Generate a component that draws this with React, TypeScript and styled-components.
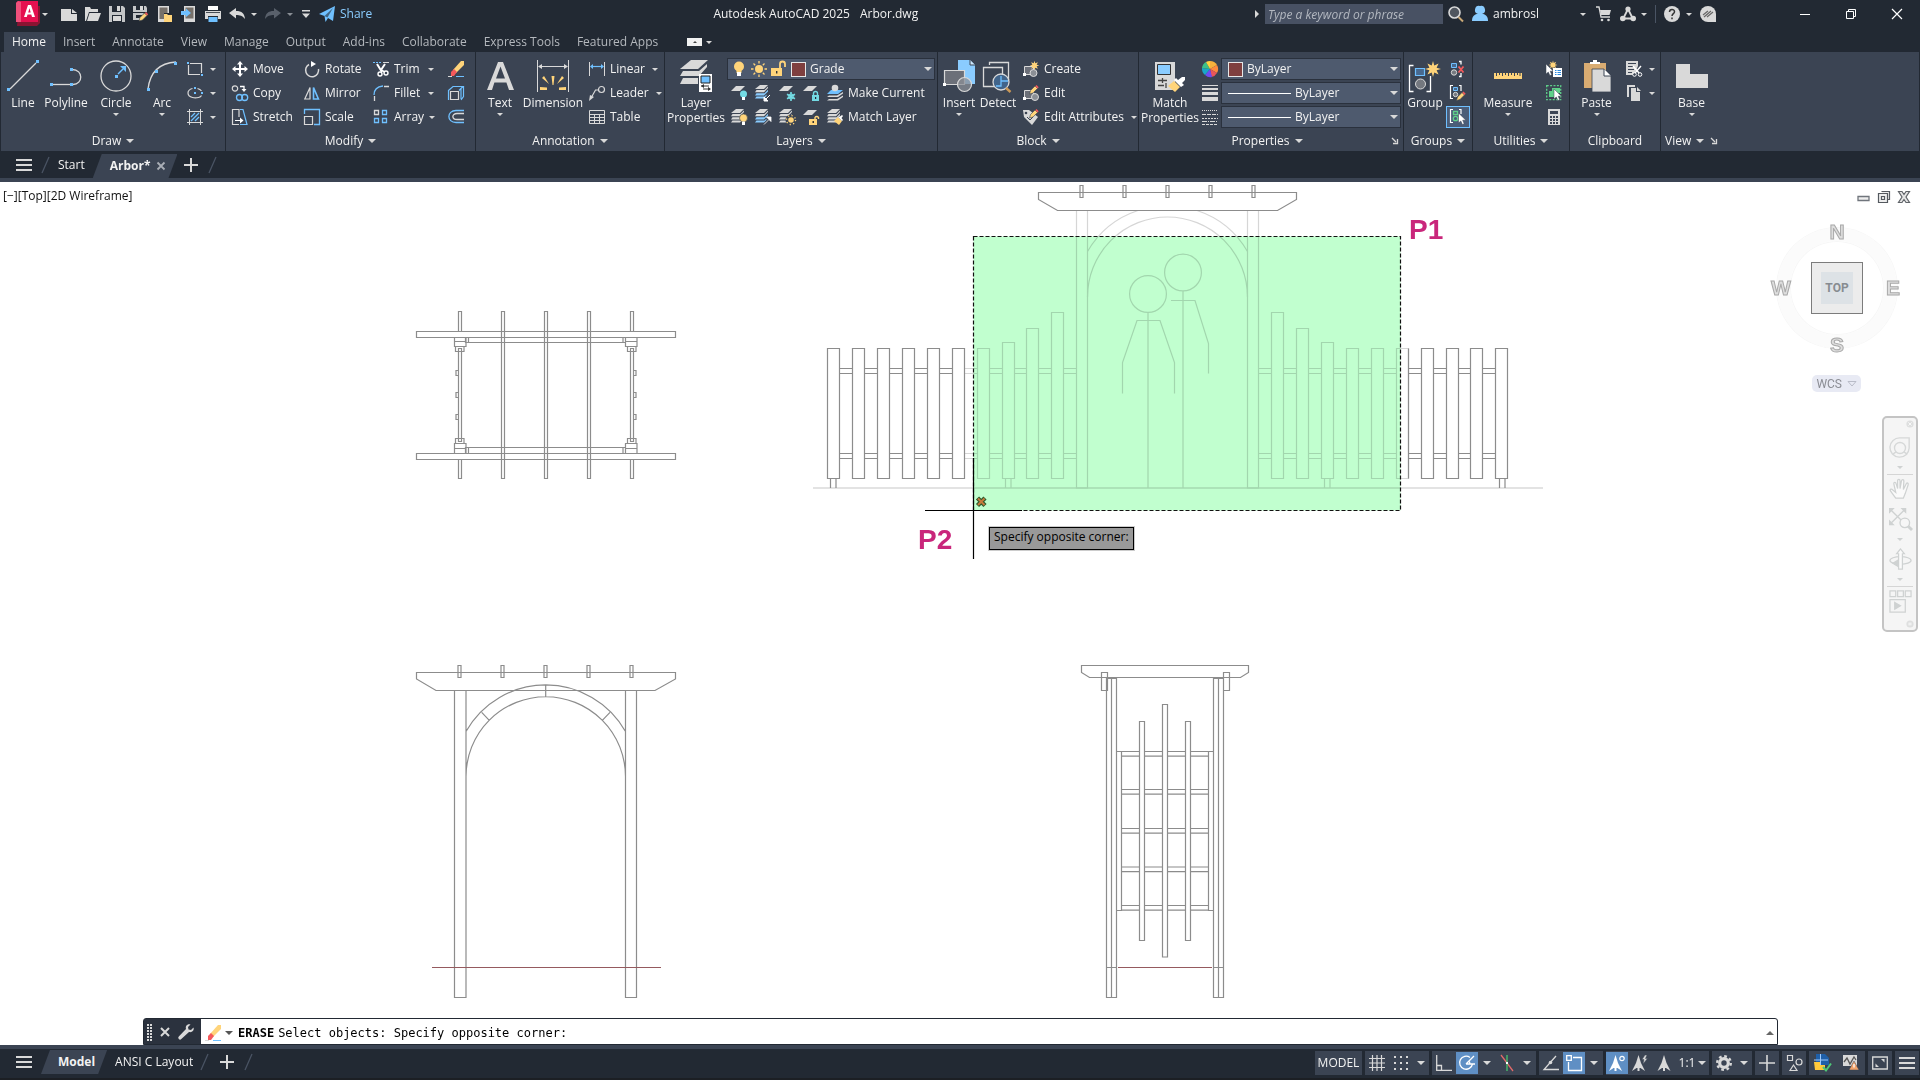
import React from "react";
import styled, { createGlobalStyle, css } from "styled-components";

const C = {
  chrome: "#222933",
  panel: "#3b4453",
  field: "#4e5a6e",
  edge: "#2a313d",
  light: "#d9d9d9",
  text: "#f2f2f2",
  muted: "#b4b8bd",
  blue: "#6fc0ff",
  sky: "#8accff",
  yellow: "#ffd47a",
  teal: "#74dbe4",
  red: "#f4595b",
  active: "#5f8fc4",
};

const UI = `"Open Sans", "Noto Sans", sans-serif`;

const Global = createGlobalStyle`
  * { box-sizing: border-box; }
  html, body { margin: 0; padding: 0; background: ${C.chrome}; }
  body { font: 12px/16px ${UI}; color: ${C.text}; }
  button, input, select { font: inherit; color: inherit; margin: 0; padding: 0; border: 0; background: none; border-radius: 0; }
  button { cursor: default; white-space: nowrap; }
  svg { display: block; flex: none; }
`;

/* ---------- icons ---------- */

const L = C.light, B = C.blue, Y = C.yellow;
const stackFull = (mid = L) => (
  <>
    <path d="M5 0h8L9 4H0z" fill={L} />
    <path d="M1.5 5h8L13 1.5V3L9 7.200H0z" fill={L} />
    <path d="M1.5 8.200h8L13 4.700v1.800L9 10.500H0z" fill={mid} />
    <path d="M1.5 11.400h8l2-2v1.500L9 13.500H0z" fill={mid} />
  </>
);
const star = (x: number, y: number, s: number, f = Y) => (
  <path
    fill={f}
    transform={`translate(${x} ${y}) scale(${s})`}
    d="M0-10 1.600-4.500 7-7 4.500-1.600 10 0 4.500 1.600 7 7 1.600 4.500 0 10-1.600 4.500-7 7-4.500 1.600-10 0-4.500-1.600-7-7-1.600-4.500z"
  />
);
const pencil = (x: number, y: number) => (
  <g transform={`translate(${x} ${y})`}>
    <path d="M0 9 1 5.500 5.500 1 8 3.500 3.500 8z" fill={Y} stroke={C.panel} strokeWidth=".6" />
    <path d="M5.800 1.200 7 0l2.200 2.200L8 3.400z" fill={C.red} />
  </g>
);
const cursor = (x: number, y: number) => (
  <path transform={`translate(${x} ${y})`} fill="#fff" stroke={C.panel} strokeWidth=".5" d="M0 0v10l2.300-2 1.600 3.500 1.800-.8L4.200 7.200h3.200z" />
);

const icons: Record<string, [number, React.ReactNode]> = {
  logo: [26, <><path d="M4 5 2 25h20l3-3V5z" fill="#8a1432" /><path d="M1 2 3 0h20v21H1z" fill="#e51050" /><path d="M1 2v19h5V1L3 0z" fill="#f0507c" /><path d="M9 16 13 4h3l4 12h-3l-.7-2.400h-3.800L11.800 16zm4.200-4.600h2.500L14.500 7.300z" fill="#fff" /></>],
  new: [16, <><path d="M0 3h10v5h6v7H0z" fill={L} /><path d="M11 3l5 4h-5z" fill={L} /></>],
  open: [16, <><path d="M0 1h5l1 2h7v3H4L1 15H0z" fill={L} /><path d="M4.500 7H16l-3 8H2z" fill={L} /></>],
  save: [16, <><path d="M0 0h14l2 2v14H0z" fill="#c4c6c8" /><path d="M3 0h9v6H3zM3 9h10v7H3z" fill={C.chrome} /><path d="M8 0h3v5H8z" fill={L} /><path d="M4 10h8v5H4z" fill={L} /></>],
  saveas: [16, <><path d="M0 0h13l1 2v4H0zM0 7h11l-4 7H0z" fill="#c4c6c8" /><path d="M3 0h8v4H3zM3 9h6v3H3z" fill={C.chrome} /><path d="M7 0h3v4H7z" fill={L} />{pencil(6, 6)}</>],
  mobileOpen: [16, <><path d="M1 0h11v7H7v9H1z" fill={L} /><path d="M2.500 1.500h8V7H7v6H2.500z" fill="#76706a" /><path d="M7 8h3l1 1h4v7H7z" fill={Y} /></>],
  mobileSave: [16, <><path d="M3 0h11v16H3z" fill={L} /><path d="M4.500 1.500h8v11h-8z" fill="#76706a" /><path d="M0 5h5V2.500L10 7l-5 4V9H0z" fill={B} /></>],
  print: [16, <><path d="M3 0h10v4H3z" fill="#fff" /><path d="M0 5h16v8h-3v-3H3v3H0z" fill={L} /><path d="M3.500 11h9v5h-9z" fill={B} /><path d="M1 6.500h14" stroke={C.chrome} strokeWidth=".8" /></>],
  undo: [16, <path d="M0 7 7 2v3c6 0 8.500 2.500 9 8-2.500-3.200-5-4-9-4v3.500z" fill={L} />],
  redo: [16, <path d="M16 7 9 2v3C3 5 .5 7.500 0 13c2.500-3.200 5-4 9-4v3.500z" fill="#59606b" />],
  custom: [10, <path d="M1 1h8v1.400H1zM1 4.500h8L5 9z" fill={L} />],
  share: [16, <><path d="M0 8 16 0l-2 15-5-3-2.500 4-1-6z" fill={B} /><path d="M5.500 10 14 2 8.500 11.500z" fill={C.chrome} opacity=".6" /></>],
  line: [32, <><path d="M3 29 29 3" stroke={L} strokeWidth="1.300" /><path d="M0 28h3v3H0zM29 0h3v3h-3z" fill={B} /></>],
  polyline: [32, <><path d="M1 24.500h21" stroke={L} strokeWidth="1.300" /><path d="M22 9.500c12 0 11 15 1 15" fill="none" stroke={L} strokeWidth="1.300" /><path d="M0 23h3v3H0zM20 8h3v3h-3zM20 23h3v3h-3z" fill={B} /></>],
  circle: [32, <><circle cx="16" cy="16" r="15" fill="none" stroke={L} strokeWidth="1.300" /><path d="m18 14 5-5" stroke={B} strokeWidth="1.500" /><path d="M26 6v6l-6-6zM15 15h3v3h-3z" fill={B} /></>],
  arc: [32, <><path d="M2 29C4 12 14 3 30 2" fill="none" stroke={L} strokeWidth="1.300" /><path d="M1 28h3v3H1zM9 10h3v3H9zM28 2h3v3h-3z" fill={B} /></>],
  rect: [16, <><path d="M3 2.500h11.500V12M13 13.500H1.500V4" fill="none" stroke={L} strokeWidth="1.200" /><path d="M0 1h2v2H0zM14 13h2v2h-2z" fill={B} /></>],
  ellipse: [16, <><path d="M5.500 3.500C-.5 5-.5 11 5.500 12.500c2 .6 4 .5 6 0 1.500-.4 2.500-1 3-2M10.500 3.500c2 .5 3.300 1.500 4 2.500" fill="none" stroke={L} strokeWidth="1.200" /><path d="M7 2h2v2H7zM7 7h2v2H7zM14 7h2v2h-2z" fill={B} /></>],
  hatch: [16, <><path d="M2.500 0v16M13.500 0v16M0 2.500h16M0 13.500h16" stroke={L} /><path d="m4 8 4-4M4 12l8-8M8 12l4-4" stroke={B} strokeWidth="1.300" /></>],
  move: [16, <path d="M8 0l3 3.500H9V7h3.500V5L16 8l-3.500 3V9H9v3.500h2L8 16l-3-3.500h2V9H3.500v2L0 8l3.500-3v2H7V3.500H5z" fill="#fff" />],
  rotate: [16, <><path d="M5 3.500A6.500 6.500 0 1 0 14.500 8" fill="none" stroke={L} strokeWidth="1.500" /><path d="M7 0l5 3-5 3z" fill="#fff" /></>],
  trim: [16, <><path d="M0 1.500h8" stroke={B} strokeDasharray="2 1" /><path d="M10 1.500h6" stroke={L} /><path d="M4 3l5 8M12 3 8 9" stroke="#fff" strokeWidth="2" /><circle cx="7" cy="13" r="2" fill="none" stroke="#fff" strokeWidth="1.400" /><circle cx="13" cy="12" r="2" fill="none" stroke="#fff" strokeWidth="1.400" /><path d="m8 9 4 2" stroke="#fff" strokeWidth="1.400" /></>],
  copy: [16, <><circle cx="3" cy="3.500" r="2.700" fill="none" stroke={L} strokeWidth="1.200" /><path d="M8 1.500h4v3" fill="none" stroke="#fff" strokeWidth="1.300" /><path d="M9.500 4h5L12 7z" fill="#fff" /><circle cx="7.500" cy="12.500" r="3" fill="none" stroke={B} strokeWidth="1.300" /><circle cx="12.700" cy="12.500" r="3" fill="none" stroke={B} strokeWidth="1.300" /></>],
  mirror: [16, <><path d="M6 2.500V14H.8z" fill="none" stroke={L} strokeWidth="1.200" /><path d="M9.500 2.500V14h4.900z" fill="none" stroke={B} strokeWidth="1.600" /></>],
  fillet: [16, <><path d="M1 10C1 4 5 1.500 10 1" fill="none" stroke={B} strokeWidth="1.300" /><path d="M11 1.500h5M1.500 11v5" stroke={L} strokeWidth="1.300" /></>],
  stretch: [16, <><path d="M7 15.500H.5V.5H7V8" fill="none" stroke={L} strokeWidth="1.200" /><path d="M8 .5h3l4 15H8" fill="none" stroke={B} strokeWidth="1.200" /><path d="M3 11h5V8.500l3.500 3L8 14.500V12H3z" fill="#fff" /></>],
  scale: [16, <><path d="M.5 5V.5h15v15H10" fill="none" stroke={B} strokeWidth="1.300" /><path d="M.5 7.500h8v8h-8z" fill="none" stroke={L} strokeWidth="1.200" /></>],
  array: [16, <g fill="none" strokeWidth="1.300"><path d="M1.500 1.500h4v4h-4z" stroke={L} /><path d="M9.500 1.500h4v4h-4zM1.500 9.500h4v4h-4zM9.500 9.500h4v4h-4z" stroke={B} /></g>],
  erase: [16, <><path d="M5 9 13 0h3v4l-8 8z" fill={Y} /><path d="M3 11l3-3 3 3-3 4H3z" fill={C.red} /><path d="M0 15.500h4" stroke={L} /><path d="M8 15.500h8" stroke={B} /></>],
  explode: [16, <g fill="none" strokeWidth="1.200"><path d="M2.500 6.500h8v8h-8z" stroke={L} /><path d="M.5 5.500 5 1.500h10l-4 4M.5 5v10M13 15l2.500-3.500v-10M13 4v10" stroke={B} /></g>],
  offset: [16, <g fill="none" strokeWidth="1.300"><path d="M16 1.500H8c-9.500 0-9.500 12 0 12h8" stroke={B} /><path d="M16 4.500H9c-5.500 0-5.500 6 0 6h7" stroke={L} /></g>],
  text: [32, <path d="M3 30 14 2h5l11 28h-5l-2.600-7.500H10.400L8 30zm9-11.500h9L16.500 6.500z" fill={L} />],
  dimension: [32, <><path d="M.5 0v32M31.500 0v32" stroke={L} /><path d="M2 6.500h28" stroke={L} /><path d="M1 6.500 5 4v5zM31 6.500 27 4v5z" fill={L} /><path d="M14.500 16h3l-1 9h-1zM5 18l2-2 5 8zM27 18l-2-2-5 8zM3 27l7 .5V30H3zM29 27l-7 .5V30h7z" fill={Y} /></>],
  linear: [16, <><path d="M.5 1v14M15.500 1v14" stroke={L} /><path d="M2 5.500h12" stroke={B} strokeWidth="1.200" /><path d="M1 5.500 4 3v5zM15 5.500 12 3v5z" fill={B} /></>],
  leader: [16, <><circle cx="12.500" cy="4.500" r="3" fill="none" stroke={L} strokeWidth="1.200" /><path d="M9.500 5H6.500L2 13" fill="none" stroke={L} strokeWidth="1.200" /><path d="M0 16l1-6 4 2z" fill={L} /></>],
  table: [16, <path d="M.5 1.500h15v13H.5zM.5 5.500h15M.5 8.500h15M.5 11.500h15M5.500 5v10M10.500 5v10" fill="none" stroke={L} />],
  layerProps: [32, <><g fill={L}><path d="M11 0h17L18 9H0z" /><path d="M3 11h16l8-7v3l-8 9H0z" /><path d="M3 18h15v6H0z" /></g><path d="M0 17h18" stroke={C.panel} strokeWidth="1.500" /><path d="M19 14h13v18H19z" fill="#fff" /><path d="M21 16h9v7h-9z" fill={B} stroke="#222" /><path d="M21 26h8M23 29h7" stroke="#333" /><path d="M24 24l-3 2 3 2zM28 27l3 2-3 2z" fill="#333" /></>],
  bulb: [16, <><circle cx="8" cy="5.500" r="5" fill={Y} /><path d="M5.500 9h5v3h-5z" fill={Y} /><path d="M6 11h4v4H6z" fill="#fff" /></>],
  sun: [16, <><circle cx="8" cy="8" r="4" fill={Y} /><path d="M8 0v2.500M8 13.500V16M0 8h2.500M13.500 8H16M2.500 2.500l1.700 1.700M11.800 11.800l1.700 1.700M13.500 2.500l-1.700 1.700M4.200 11.800l-1.700 1.700" stroke={Y} strokeWidth="1.300" /></>],
  unlock: [16, <><path d="M0 7h11v8H0z" fill={Y} /><path d="M9 7V3a2.500 2.500 0 0 1 5 0v3" fill="none" stroke={Y} strokeWidth="1.800" /><path d="M5 10h1.400v2.500H5z" fill="#333" /></>],
  layOff: [16, <><path d="M5 1h9L9 6H0z" fill={L} /><circle cx="12.500" cy="9" r="3.500" fill={C.teal} /><path d="M11 12h3v3h-3z" fill="#fff" /></>],
  layIso: [16, <>{stackFull(C.sky)}<path d="M9 16v-4l4 4zM11 14l4-4" stroke="#fff" fill="#fff" /></>],
  layFreeze: [16, <><path d="M5 1h9L9 6H0z" fill={L} /><path d="M12 7v9M8 9.300l8 4.500M8 13.800l8-4.500" stroke={C.teal} strokeWidth="1.600" /><circle cx="12" cy="11.500" r="2.600" fill="none" stroke={C.teal} /></>],
  layLock: [16, <><path d="M5 1h9L9 6H0z" fill={L} /><path d="M9 10h7v6H9z" fill={C.teal} /><path d="M10.500 10V8.500a2 2 0 0 1 4 0V10" fill="none" stroke={C.teal} strokeWidth="1.400" /><path d="M12 12h1.200v2H12z" fill="#223" /></>],
  layCurrent: [16, <><path d="M4 5h12l-5 4H0z" fill={B} /><path d="M2 10.500h8L16 7v1.500L11 12H0zM2 14h8l6-3.500V12l-5 3.500H0z" fill={L} /><circle cx="8" cy="3" r="3.300" fill={L} /></>],
  layOn: [16, <>{stackFull()}<circle cx="12.500" cy="9" r="4" fill={Y} stroke={C.panel} strokeWidth=".6" /><path d="M11 12.500h3V16h-3z" fill="#fff" /></>],
  layUniso: [16, <>{stackFull(C.sky)}<path d="M16 8v4.500L11.500 8zM9 15.500l5-5" stroke="#fff" fill="#fff" strokeWidth=".8" /></>],
  layThaw: [16, <>{stackFull()}<circle cx="12" cy="11" r="5.500" fill={C.panel} /><circle cx="12" cy="11" r="2.800" fill={Y} /><circle cx="12" cy="11" r="4.500" fill="none" stroke={Y} strokeWidth="1.300" strokeDasharray="1.200 2.330" /></>],
  layUnlock: [16, <><path d="M5 1h9L9 6H0z" fill={L} /><path d="M6 10h8v6H6z" fill={Y} /><path d="M12 10V8.500a2 2 0 0 1 3.500 0V10" fill="none" stroke={Y} strokeWidth="1.400" /><path d="M9.500 12H11v2H9.500z" fill="#333" /></>],
  layMatch: [16, <>{stackFull()}<path d="m7 12 4-4 4 4-3 4z" fill={Y} /><path d="m11 8 4 4 1-1-1.500-2 1.500-2-1-1-2 1.500z" fill="#fff" /></>],
  insert: [32, <><path d="M15 0h12l5 5v19H15z" fill={C.sky} /><path d="M27 0v5h5" fill="#cfe8fc" stroke={C.panel} /><path d="M1.500 10.500h20v14h-20z" fill="#6c7079" stroke={L} strokeWidth="1.200" /><path d="M0 23h3v3H0z" fill="#fff" /><circle cx="21.500" cy="24.500" r="7" fill="#8b8f95" fillOpacity=".75" stroke={L} strokeWidth="1.200" /></>],
  detect: [32, <><path d="M7.500 5V2.500h19V20" fill="none" stroke={L} strokeWidth="1.300" /><path d="M1.500 7.500h19v19h-19z" fill="none" stroke={L} strokeWidth="1.300" /><circle cx="19" cy="22" r="8" fill="#41648a" stroke={L} strokeWidth="1.300" /><path d="M19 16v10h-5M19 21h7" stroke={B} fill="none" strokeWidth="1.300" /><path d="m24 28 4.500 4" stroke="#c99858" strokeWidth="2.400" /></>],
  create: [16, <><path d="M1.500 5.500h9v8h-9z" fill="#6c7079" stroke={L} /><circle cx="10.500" cy="12" r="3.500" fill="#8b8f95" stroke={L} /><path d="M0 12h3v3H0z" fill="#fff" />{star(11.500, 4.500, 0.480)}</>],
  edit: [16, <><path d="M1.500 5.500h9v8h-9z" fill="#6c7079" stroke={L} /><circle cx="12" cy="12" r="3.500" fill="#8b8f95" stroke={L} /><path d="M0 12h3v3H0z" fill="#fff" />{pencil(6.500, 0)}</>],
  editAttr: [16, <><path d="M0 1h6l9 7-6 8-8-8z" fill={L} /><circle cx="3" cy="4" r="1.300" fill={C.panel} /><path d="m4 8 3 3 3-3" stroke={C.panel} fill="none" />{pencil(6.500, 0)}</>],
  matchProps: [32, <><path d="M1 2h20v28H1z" fill={L} /><path d="M3.500 4.500h13v10h-13z" fill={C.sky} stroke="#333" /><path d="M4 20.500h9M8.500 18v5M4 25.500h6M12 23v5" stroke="#444" strokeWidth="1.300" /><path d="m14 26 6-5 6 6-5 5z" fill={Y} /><path d="m20 20 2-2 2 2 4-3 3 0 0 3-3 3 2 2-3 2z" fill="#fff" /></>],
  wheel: [16, <><path d="M8 8V0a8 8 0 0 1 7 4z" fill="#f7b13c" /><path d="M8 8 15 4a8 8 0 0 1 0 8z" fill="#ff8a3d" /><path d="m8 8 7 4a8 8 0 0 1-5.500 4z" fill="#e9565a" /><path d="M8 8l2 8a8 8 0 0 1-7-2z" fill="#6f4bf0" /><path d="m8 8-5 6A8 8 0 0 1 0 7z" fill="#19a6c9" /><path d="M8 8 0 7A8 8 0 0 1 4 1z" fill="#3cc088" /><path d="M8 8 4 1a8 8 0 0 1 4-1z" fill="#ffd23e" /></>],
  weight: [16, <path d="M0 0h16v1H0zM0 3h16v2H0zM0 7h16v3H0zM0 12h16v4H0z" fill={L} />],
  ltype: [16, <g stroke={L}><path d="M0 1.500h16" strokeDasharray="1 1" /><path d="M0 5.500h16" strokeDasharray="4 1" /><path d="M0 9.500h16" strokeDasharray="2 1" /><path d="M0 12.500h16" strokeDasharray="5 1 1 1" /><path d="M0 15.500h16" strokeDasharray="3 1" /></g>],
  group: [32, <><path d="M4.500 5.500H.5v26h4M17.500 31.500h4V16" fill="none" stroke="#fff" strokeWidth="1.300" /><path d="M6.500 8.500h9v7h-9z" fill="#48698f" stroke={B} strokeWidth="1.200" /><circle cx="11.500" cy="24" r="5" fill="#74787f" stroke={L} />{star(24, 9, 0.800)}</>],
  ungroup: [16, <><path d="M9 .5h2v3M11 12v3.500H9" fill="none" stroke="#fff" strokeWidth="1.300" /><path d="M1.500 2.500h5v4h-5z" fill="#48698f" stroke={B} /><circle cx="4" cy="11.500" r="2.700" fill="#74787f" stroke={L} /><path d="m8.500 5.500 5 6m0-6-5 6" stroke={C.red} strokeWidth="1.800" /></>],
  groupEdit: [16, <><path d="M3 .5H.5v13H3M9 .5h2V6" fill="none" stroke="#fff" strokeWidth="1.200" /><path d="M3.500 2.500h4v3h-4z" fill="#48698f" stroke={B} /><circle cx="5.500" cy="9.500" r="2.200" fill="#74787f" stroke={L} />{pencil(6.500, 6.500)}</>],
  groupSel: [16, <><path d="M3 .5H.5v13H3M9 .5h2V5" fill="none" stroke="#fff" strokeWidth="1.200" /><path d="M3.500 2.500h4v3h-4z" fill="none" stroke="#5fd08a" strokeWidth="1.300" /><circle cx="5.500" cy="9.500" r="2.200" fill="none" stroke="#5fd08a" strokeWidth="1.300" />{cursor(8.500, 4)}</>],
  measure: [32, <><path d="M2 13h28v6H2z" fill={Y} /><path d="M4.500 13v3M7.500 13v2M10.500 13v3M13.500 13v2M16.500 13v3M19.500 13v2M22.500 13v3M25.500 13v2M28 13v3" stroke={C.panel} /></>],
  quick: [16, <>{star(7, 4, 0.450)}{cursor(0, 3)}<path d="M7 7h9v9H7z" fill="#fff" /><path d="M9 9.500h1.500M9 11.500h1.500M9 13.500h1.500M11.500 9.500H15M11.500 11.500H15M11.500 13.500H15" stroke="#2a8ae0" /></>],
  selectAll: [16, <><path d="M.7.700h14v14H.7z" fill="none" stroke="#5fd08a" strokeWidth="1.300" strokeDasharray="2 1.400" /><path d="M3 6h3V3h8v5H9v4H3z" fill="#5fd08a" />{cursor(8, 4)}</>],
  calc: [16, <><path d="M2 0h12v16H2z" fill={L} /><path d="M4 2h8v3H4zM4 7h2v2H4zM7 7h2v2H7zM10 7h2v2h-2zM4 10h2v2H4zM7 10h2v2H7zM10 10h2v2h-2zM4 13h2v2H4zM7 13h2v2H7zM10 13h2v2h-2z" fill={C.panel} /></>],
  paste: [32, <><path d="M3 3h22v25H3z" fill="#d9ac72" /><path d="M9 4V2h3V0h4v2h3v2z" fill="#fff" /><path d="M11 9h12l7 7v16H11z" fill={L} stroke={C.panel} strokeWidth=".8" /><path d="M23 9v7h7" fill="#fff" stroke={C.panel} /></>],
  cut: [16, <><path d="M0 0h12v5l-4 9H0z" fill={L} /><path d="M2 2.500h8M2 5.500h5M2 8.500h6M2 11.500h4" stroke={C.panel} /><path d="m7 5 6 7M15 5l-6 7" stroke="#fff" strokeWidth="1.400" /><circle cx="8.500" cy="13.500" r="1.800" stroke="#fff" fill={C.panel} /><circle cx="14" cy="13.500" r="1.800" stroke="#fff" fill={C.panel} /></>],
  copyClip: [16, <><path d="M1 0h8v2H3v10H1z" fill={L} /><path d="M5 3h5v4h4v9H5z" fill={L} /><path d="M11 2l4 4h-4z" fill={L} /></>],
  base: [32, <path d="M0 4h14v10h18v14H0z" fill={L} />],
  search: [16, <><circle cx="6.500" cy="6.500" r="5.500" fill="#50565f" stroke={L} strokeWidth="1.600" /><path d="m10.500 11 4.500 4.500" stroke="#c9a877" strokeWidth="2" /></>],
  user: [16, <path d="M8 0a4 4 0 0 1 2 7.800c4 .8 6 2.700 6 7.200H0c0-4.500 2-6.400 6-7.200A4 4 0 0 1 8 0z" fill={C.sky} />],
  cart: [16, <><path d="M0 1h3l2 10h9" fill="none" stroke={L} strokeWidth="1.300" /><path d="M4 4h11l-1.500 5H5z" fill={L} /><circle cx="6" cy="14" r="1.300" fill={L} /><circle cx="12.500" cy="14" r="1.300" fill={L} /></>],
  hub: [16, <><path d="M8 3 3 13M8 3l5 10M3 12.500h10" stroke={L} strokeWidth="1.800" /><circle cx="8" cy="3" r="2.600" fill={L} /><circle cx="2.800" cy="12.500" r="2.800" fill={L} /><circle cx="13.200" cy="12.500" r="2.800" fill={L} /></>],
  help: [16, <><circle cx="8" cy="8" r="8" fill={L} /><path d="M5.500 6c0-3.500 5-3.300 5-.3 0 2-2.500 2-2.500 4.300M8 11.500v1.700" fill="none" stroke="#333" strokeWidth="1.500" /></>],
  assist: [16, <><path d="M8 0a8 8 0 0 1 8 8v8H8A8 8 0 0 1 8 0z" fill={L} /><path d="m3 9 5-4M4 11l7-6M7 11l6-5" stroke="#666" strokeWidth="1.200" /></>],
  min: [12, <path d="M1 6.500h10" stroke="#fff" />],
  restore: [12, <path d="M1.500 3.500h7v7h-7zM3.500 3V1.500h7v7H9" fill="none" stroke="#fff" />],
  close: [12, <path d="m1 1 10 10M11 1 1 11" stroke="#fff" strokeWidth="1.200" />],
  menu: [16, <path d="M0 2h16v2H0zM0 7h16v2H0zM0 12h16v2H0z" fill={L} />],
  plus: [14, <path d="M6 0h2v6h6v2H8v6H6V8H0V6h6z" fill={L} />],
  tabClose: [8, <path d="m.5.500 7 7M7.500.500l-7 7" stroke="#a9aeb6" strokeWidth="1.800" />],
  slash: [16, <path d="M4 16 11 0" stroke="#4a5464" strokeWidth="1.300" />],
  launch: [8, <path d="m1 1 4 4M6.500 2v4.500H2" stroke={L} strokeWidth="1.300" fill="none" />],
  wrench: [16, <path d="M15.500 3.500 13 6l-2.500-.5L10 3l2.500-2.500C9.500-.5 7 2 8 5L.8 12.500a1.700 1.700 0 0 0 2.500 2.500L11 8c3 .8 5.500-1.500 4.500-4.500z" fill={L} />],
  cmdClose: [12, <path d="m2 2 8 8M10 2l-8 8" stroke={L} strokeWidth="2" />],
  grip: [12, <g fill={L}>{[0, 1, 2, 3, 4, 5].map(r => [0, 1].map(c => <path key={`${r}${c}`} d={`M${3 + c * 3} ${r * 3 - 2}h2v2h-2z`} />))}</g>],
  grid: [16, <path d="M3.500 0v16M8 0v16M12.500 0v16M0 3.500h16M0 8h16M0 12.500h16" stroke={L} strokeWidth="1.200" />],
  dots: [16, <g fill={L}>{[0, 1, 2].map(r => [0, 1, 2].map(c => <path key={`${r}${c}`} d={`M${1 + c * 6} ${1 + r * 6}h2v2h-2z`} />))}</g>],
  ortho: [16, <path d="M.7 0v15.300H16M.7 10.500H5.500v5" fill="none" stroke={L} strokeWidth="1.300" />],
  polar: [16, <><path d="M11 2.500A6.500 6.500 0 1 0 13.500 9" fill="none" stroke="#fff" strokeWidth="1.300" /><path d="M7 9 15 1M7 9h9M11 9a4 4 0 0 0-1.500-3" fill="none" stroke="#fff" strokeWidth="1.300" /></>],
  iso: [16, <><path d="m2 0 12 16" stroke="#e26a6a" strokeWidth="1.300" /><path d="M8 0v16" stroke="#49c46d" strokeWidth="1.300" /><path d="M7 7h2v2H7z" fill="#fff" /></>],
  track: [16, <><path d="M13 1 1 14.500h15" fill="none" stroke={L} strokeWidth="1.300" /><circle cx="7.500" cy="7.500" r="1.800" fill={L} /></>],
  osnap: [16, <><path d="M7 2.500h8.500v13H2.500V7" fill="none" stroke="#fff" strokeWidth="1.300" /><path d="M.7.700h4.600v4.600H.7z" fill="none" stroke="#fff" strokeWidth="1.300" /></>],
  annoVis: [16, <><path d="M6.500 0 9 8l4 8-4.500-3h-1V16h-2v-3h-1L0 16l4-8z" fill="#fff" /><circle cx="13" cy="3.500" r="2.200" fill="none" stroke="#fff" strokeWidth="1.200" /></>],
  annoAuto: [16, <><path d="M6.500 0 9 8l4 8-4.500-3h-1V16h-2v-3h-1L0 16l4-8z" fill={L} /><path d="m13 0-3 4.500h2L11 9l4.500-5.500h-2L15 0z" fill={L} stroke={C.panel} strokeWidth=".5" /></>],
  anno: [16, <path d="M8 0l2.500 8 4 8-4.500-3H9V16H7v-3H6l-4.500 3 4-8z" fill={L} />],
  gear: [16, <><circle cx="8" cy="8" r="4.300" fill="none" stroke={L} strokeWidth="3.200" /><circle cx="8" cy="8" r="6.800" fill="none" stroke={L} strokeWidth="2.400" strokeDasharray="2.700 2.640" /></>],
  thinPlus: [16, <path d="M7.200 0h1.600v7.200H16v1.600H8.800V16H7.200V8.800H0V7.200h7.200z" fill={L} />],
  shapes: [16, <g fill="none" stroke={L} strokeWidth="1.200"><path d="M1.500.500h5v5h-5zM7.500 10l3.500 5.500H4z" /><circle cx="13" cy="7" r="3" /></g>],
  hardware: [18, <><path d="M2 0h9l4 4v7H2z" fill="#1f5fa8" /><path d="M0 6h14M6.500 0v12" stroke="#9ecbff" /><path d="M0 8h6v3h5v5H1z" fill="#ffc93c" /><path d="m9 13 3 3.500 5-7" fill="none" stroke="#4fc878" strokeWidth="2" /></>],
  monitor: [18, <><path d="M1 1h14v11H1z" fill={L} /><path d="m2 8 3-4 3 6 4-7 2 3" fill="none" stroke="#555" strokeWidth="1.300" /><path d="m12 7 5 9H7z" fill="#f2a36b" stroke={C.panel} strokeWidth=".5" /><path d="M12 10v3.500" stroke="#fff" strokeWidth="1.300" /></>],
  clean: [16, <><path d="M.7 2h14.600v12H.7z" fill="none" stroke={L} strokeWidth="1.300" /><path d="M12.500 4v3.500L9 4zM3.500 12V8.500L7 12z" fill={L} /></>],
  docMin: [14, <path d="M1 6.500h11v4H1z" fill="#eee" stroke="#70757c" strokeWidth="1.300" />],
  docRestore: [14, <path d="M4.500 1.500h8v8h-2M1.500 3.500h9v9h-9zM4.500 6.500h3v3h-3z" fill="#eee" stroke="#55595f" strokeWidth="1.200" />],
  docClose: [14, <path d="M1.500 1.500h3.500l2 3 2-3h3.500L9 7l3.500 5.500H9l-2-3-2 3H1.500L5 7z" fill="#e6e6e6" stroke="#606469" strokeWidth="1.200" />],
  navWheel: [24, <g fill="none" stroke="#d6d8d8" strokeWidth="1.500"><path d="M12 1h10v11A10.500 10.500 0 1 1 12 1z" /><circle cx="12" cy="12" r="6" /><path d="m4 19 4-3M20 19l-4-3" /></g>],
  navPan: [24, <path d="M7 21 1.500 13.500c-1-2 1-2.500 2.500-1L7 15 5 6c0-2 2-2 2.500 0L9 11V3c0-2 2.500-2 2.500 0v8l1.500-8c.5-2 2.500-1.500 2.500 0l-.5 9 3-6c1-1.500 2.500-.5 2 1l-3 9-2 5z" fill="#fafafa" stroke="#cfd2d2" strokeWidth="1.300" />],
  navZoom: [24, <><path d="m2 2 14 14M16 2 2 16" stroke="#cfd2d2" strokeWidth="1.400" /><path d="M0 0h6L0 6zM18 0v6l-6-6zM0 18v-6l6 6z" fill="#cfd2d2" /><circle cx="16.500" cy="15.500" r="5" fill="#f6f6f6" stroke="#cfd2d2" strokeWidth="1.400" /><path d="m20 19 4 4" stroke="#cfd2d2" strokeWidth="3" /></>],
  navOrbit: [24, <g fill="#fafafa" stroke="#cfd2d2" strokeWidth="1.300"><ellipse cx="12" cy="13" rx="11" ry="4" fill="none" /><path d="M12 1 8 6h2v16h4V6h2z" /><path d="M4 16l5-3v6z" fill="#cfd2d2" /></g>],
  navShow: [24, <g fill="none" stroke="#cfd2d2" strokeWidth="1.300"><path d="M1 1h6v6H1zM9 1h6v6H9zM17 1h6v6h-6zM1 10h16v13H1z" /><path d="m6 13 6 3.500-6 3.500z" fill="#cfd2d2" /></g>],
  navClose: [10, <><circle cx="5" cy="5" r="4.500" fill="#dedfdf" /><path d="m3 3 4 4M7 3 3 7" stroke="#fff" /></>],
  navMore: [10, <><circle cx="5" cy="5" r="4.500" fill="#dedfdf" /><path d="M3 4h4M3 6h4" stroke="#fff" /></>],
  wcs: [10, <path d="M1 2.500h8L5 7z" fill="none" stroke="#b9bcc8" />],
};

const Icon = ({ name, size }: { name: string; size?: number }) => {
  const [box, art] = icons[name];
  return (
    <svg width={size ?? box} height={size ?? box} viewBox={`0 0 ${box} ${box}`} aria-hidden="true" overflow="visible">
      {art}
    </svg>
  );
};

const Caret = styled.span<{ $s?: number; $c?: string }>`
  flex: none;
  width: 0;
  height: 0;
  border: ${p => p.$s ?? 3}px solid transparent;
  border-top-color: ${p => p.$c ?? C.light};
  border-bottom-width: 0;
`;

/* ---------- frame ---------- */

const Shell = styled.div`
  display: flex;
  flex-direction: column;
  height: 100vh;
  background: ${C.chrome};
  overflow: hidden;
`;

const TitleBar = styled.header`
  display: grid;
  grid-template-columns: 37% 1fr auto;
  align-items: center;
  height: 28px;
  flex: none;
`;

const Quick = styled.div`
  display: flex;
  align-items: center;
  gap: 8px;
  padding-left: 15px;
`;

const ToolButton = styled.button<{ $gap?: number }>`
  display: flex;
  align-items: center;
  gap: ${p => p.$gap ?? 5}px;
`;

const AppMenu = styled(ToolButton)`
  padding-right: 5px;
`;

const Share = styled(ToolButton)`
  color: ${C.sky};
`;

const Title = styled.h1`
  display: flex;
  gap: 10px;
  margin: 0;
  padding-left: 3px;
  font: 12px/16px ${UI};
`;

const Account = styled.div`
  display: flex;
  align-items: center;
`;

const Reveal = styled.button`
  border: 4px solid transparent;
  border-left-color: ${C.light};
  border-right-width: 0;
  margin-right: 6px;
`;

const Search = styled.input`
  width: 178px;
  height: 20px;
  padding: 0 3px;
  background: #485163;
  font-style: italic;
  &::placeholder { color: #b3b8c0; opacity: 1; }
`;

const AccountTools = styled.div`
  display: flex;
  align-items: center;
  gap: 8px;
  padding: 0 66px 0 5px;
`;

const User = styled(ToolButton)`
  width: 114px;
  margin-right: 2px;
  span:first-of-type { flex: 1; text-align: left; }
`;

const Rule = styled.span`
  width: 1px;
  height: 18px;
  background: #4a5464;
`;

const WindowButton = styled.button`
  display: grid;
  place-items: center;
  width: 46px;
  height: 28px;
`;

const RibbonTabs = styled.nav`
  display: flex;
  align-items: center;
  height: 24px;
  flex: none;
  padding: 4px 0 0 4px;
`;

const RibbonTab = styled.button<{ $on?: boolean }>`
  height: 20px;
  padding: 0 9px 0 8px;
  color: ${p => (p.$on ? C.text : C.muted)};
  background: ${p => (p.$on ? C.panel : "none")};
`;

const Minimise = styled.button`
  display: flex;
  align-items: center;
  gap: 4px;
  margin-left: 20px;
`;

const MinimiseBox = styled.span`
  display: grid;
  place-items: center;
  width: 15px;
  height: 8px;
  background: #f2f2f2;
  &::after {
    content: "";
    border: 2px solid transparent;
    border-bottom-color: #444;
    border-top-width: 0;
  }
`;

/* ---------- ribbon ---------- */

const Ribbon = styled.div`
  display: flex;
  flex: none;
  height: 99px;
  margin: 0 1px;
  background: ${C.panel};
`;

const PanelBox = styled.section<{ $w?: number }>`
  display: flex;
  flex-direction: column;
  flex: ${p => (p.$w ? `0 0 ${p.$w}px` : "1 1 0")};
  border-right: ${p => (p.$w ? `1px solid ${C.chrome}` : "0")};
`;

const PanelBody = styled.div<{ $pad?: number }>`
  display: flex;
  height: 78px;
  padding-left: ${p => p.$pad ?? 0}px;
`;

const PanelFoot = styled.footer<{ $start?: boolean }>`
  display: flex;
  align-items: center;
  justify-content: ${p => (p.$start ? "flex-start" : "center")};
  height: 21px;
  padding: 0 4px;
  gap: 6px;
`;

const Launch = styled.button<{ $far?: boolean }>`
  margin-left: ${p => (p.$far ? "auto" : "0")};
`;

const FootFill = styled.span`
  margin-right: auto;
`;

const Panel = ({ title, w, pad, caret = true, launch, children }: {
  title: string; w?: number; pad?: number; caret?: boolean; launch?: boolean; children: React.ReactNode;
}) => (
  <PanelBox $w={w}>
    <PanelBody $pad={pad}>{children}</PanelBody>
    <PanelFoot $start={!w}>
      {launch && w && <FootFill />}
      <ToolButton $gap={5}>
        <span>{title}</span>
        {caret && <Caret $s={4} />}
      </ToolButton>
      {launch && (
        <Launch $far={!!w} aria-label={`${title} settings`}>
          <Icon name="launch" />
        </Launch>
      )}
    </PanelFoot>
  </PanelBox>
);

const BigButton = styled.button<{ $w: number }>`
  display: flex;
  flex-direction: column;
  align-items: center;
  flex: none;
  width: ${p => p.$w}px;
  padding-top: 8px;
  line-height: 15px;
  white-space: pre;
  svg { margin-bottom: 3px; }
  ${Caret} { margin-top: 3px; }
`;

const Big = ({ icon, label, w, menu }: { icon: string; label: string; w: number; menu?: boolean }) => (
  <BigButton $w={w}>
    <Icon name={icon} />
    {label}
    {menu && <Caret />}
  </BigButton>
);

const Column = styled.div<{ $w?: number; $pad?: number }>`
  display: flex;
  flex-direction: column;
  flex: none;
  width: ${p => (p.$w ? `${p.$w}px` : "auto")};
  padding: 5px 0 0 ${p => p.$pad ?? 0}px;
`;

const LayerRow = styled.div`
  display: flex;
  align-items: center;
  height: 24px;
  padding-left: 4px;
  gap: 8px;
`;

const SmallButton = styled.button<{ $fill?: boolean }>`
  display: flex;
  align-items: center;
  flex: none;
  height: 24px;
  gap: 5px;
  ${Caret} { margin-left: ${p => (p.$fill ? "auto" : "2px")}; }
`;

const GroupToggle = styled.button<{ $on?: boolean }>`
  display: grid;
  place-items: center;
  width: 24px;
  height: 22px;
  margin: 1px 0;
  ${p => p.$on && css`
    background: #4b5d78;
    box-shadow: inset 0 0 0 1px ${C.blue};
  `}
`;

const Small = ({ icon, label, menu, fill }: { icon: string; label?: string; menu?: boolean; fill?: boolean }) => (
  <SmallButton $fill={fill} aria-label={label ?? icon}>
    <Icon name={icon} />
    {label && <span>{label}</span>}
    {menu && <Caret />}
  </SmallButton>
);

const Combo = styled.label<{ $w: number; $pad?: number }>`
  display: flex;
  align-items: center;
  width: ${p => p.$w}px;
  height: 22px;
  margin: 1px 0;
  padding: 0 2px 0 ${p => p.$pad ?? 6}px;
  gap: 4px;
  background: ${C.field};
  border: 1px solid ${C.edge};
`;

const ComboSelect = styled.select`
  appearance: none;
  flex: 1;
  min-width: 0;
  outline: 0;
  option { color: #222; }
`;

const Swatch = styled.span`
  width: 15px;
  height: 15px;
  background: #7f3f3f;
  border: 1px solid #e6e6e6;
`;

const LineSample = styled.span`
  width: 63px;
  height: 1px;
  background: #fff;
`;

/* ---------- document tabs ---------- */

const FileTabs = styled.nav`
  display: flex;
  align-items: center;
  flex: none;
  height: 31px;
  padding: 1px 0 0 16px;
  border-bottom: 4px solid ${C.panel};
`;

const TabMenu = styled.button<{ $gap: number }>`
  padding-right: ${p => p.$gap}px;
`;

const Slanted = styled.button`
  display: flex;
  align-items: center;
  gap: 7px;
  height: 24px;
  padding: 0 12px 0 17px;
  align-self: flex-end;
  font-weight: 700;
  background: ${C.panel};
  clip-path: polygon(9px 0, 100% 0, calc(100% - 9px) 100%, 0 100%);
`;

const PlainTab = styled.button<{ $late?: boolean }>`
  padding: ${p => (p.$late ? "0 4px 0 8px" : "0 8px 0 4px")};
`;

const PlusTab = styled.button`
  padding: 0 7px;
`;

/* ---------- canvas ---------- */

const Viewport = styled.main`
  position: relative;
  flex: 1;
  min-height: 0;
  overflow: hidden;
  background: #fff;
  color: #111;
`;

const Model = styled.svg`
  position: absolute;
  inset: 0;
  width: 100%;
  height: 100%;
`;

const ViewLabel = styled.div`
  position: absolute;
  left: 3px;
  top: 6px;
`;

const Marker = styled.div<{ $x: number; $y: number }>`
  position: absolute;
  left: ${p => p.$x}px;
  top: ${p => p.$y}px;
  font: 700 28px/32px "Liberation Sans", sans-serif;
  color: #c9267b;
`;

const Prompt = styled.div`
  position: absolute;
  left: 989px;
  top: 345px;
  height: 23px;
  padding: 1px 4px 0 4px;
  border: 1px solid #000;
  outline: 1px solid #0003;
  background: #999;
  color: #000;
`;

const DocButtons = styled.div`
  position: absolute;
  right: 9px;
  top: 8px;
  display: flex;
  gap: 6px;
`;

const Compass = styled.div`
  position: absolute;
  right: 23px;
  top: 46px;
  display: grid;
  width: 120px;
  height: 120px;
  place-items: center;
  border: 13px solid #fbfbfb;
  border-radius: 50%;
  box-shadow: 0 0 0 1px #f7f7f7, inset 0 0 0 1px #f7f7f7;
`;

const Dir = styled.button<{ $x: number; $y: number }>`
  position: absolute;
  left: ${p => p.$x}px;
  top: ${p => p.$y}px;
  width: 24px;
  height: 22px;
  font: 700 21px/22px "Liberation Sans", sans-serif;
  text-align: center;
  color: #dedede;
  -webkit-text-stroke: 1px #a9a9a9;
`;

const Cube = styled.button`
  display: grid;
  place-items: center;
  width: 52px;
  height: 52px;
  border: 1px solid #7c7c7c;
  background: #ececec;
  span {
    width: 32px;
    height: 32px;
    background: #dde2e6;
    color: #878c91;
    font: 700 12px/32px Roboto, sans-serif;
  }
`;

const Wcs = styled.button`
  position: absolute;
  right: 59px;
  top: 193px;
  display: flex;
  align-items: center;
  gap: 5px;
  height: 17px;
  padding: 0 4px;
  border-radius: 5px;
  background: #e8eaf4;
  color: #8b8d94;
  font: 12px/16px Roboto, sans-serif;
`;

const NavBar = styled.div`
  position: absolute;
  right: 2px;
  top: 234px;
  display: flex;
  flex-direction: column;
  align-items: center;
  width: 36px;
  height: 216px;
  padding: 2px 4px;
  border: 2px solid #c4c4c4;
  border-radius: 5px;
  background: #f5f5f5;
  gap: 7px;
  hr { width: 26px; margin: -2px 0 -4px; border: 0; border-top: 1px solid #d5d5d5; }
`;

const NavEnd = styled.button<{ $last?: boolean }>`
  align-self: flex-end;
  margin: ${p => (p.$last ? "auto -2px 0 0" : "0 -2px 2px 0")};
`;

const Command = styled.div`
  position: absolute;
  left: 143px;
  right: 142px;
  bottom: 0;
  display: flex;
  height: 27px;
  border: 1px solid ${C.chrome};
  border-radius: 3px 3px 0 0;
  background: #fff;
  color: #000;
`;

const CommandTools = styled.div`
  display: flex;
  align-items: center;
  gap: 3px;
  width: 57px;
  background: #2b323e;
  button:last-child { padding: 0 4px; }
`;

const CommandText = styled.label`
  display: flex;
  align-items: center;
  flex: 1;
  gap: 4px;
  padding: 2px 3px 0 4px;
  font: 12px/20px "DejaVu Sans Mono", "Liberation Mono", monospace;
  b { margin-left: 1px; }
`;

const CommandInput = styled.input`
  flex: 1;
  outline: 0;
`;

const UpCaret = styled.button`
  border: 4px solid transparent;
  border-bottom-color: #666;
  border-top-width: 0;
`;

/* ---------- status bar ---------- */

const Status = styled.footer`
  display: flex;
  align-items: center;
  justify-content: space-between;
  flex: none;
  height: 35px;
  border-top: 4px solid ${C.panel};
  border-bottom: 2px solid #1c1f24;
`;

const Layouts = styled.nav`
  display: flex;
  align-items: center;
  height: 25px;
  padding-left: 16px;
  align-self: flex-start;
`;

const StatusTools = styled.div`
  display: flex;
  gap: 3px;
  padding-right: 1px;
  margin-top: -1px;
`;

const StatusGroup = styled.div`
  display: flex;
  align-items: center;
  height: 24px;
  background: ${C.panel};
`;

const Cell = styled.button<{ $w?: number; $on?: boolean }>`
  display: flex;
  align-items: center;
  justify-content: center;
  gap: 3px;
  width: ${p => p.$w ?? 24}px;
  height: 22px;
  background: ${p => (p.$on ? C.active : "none")};
`;

/* ---------- drawing data ---------- */

const R = (x1: number, y1: number, x2: number, y2: number) => `M${x1} ${y1}H${x2}V${y2}H${x1}Z`;

const slatX = [458.5, 501.5, 544.5, 587.5, 630.5];

const plan = [
  R(416.5, 331.5, 675.5, 337.5),
  R(416.5, 453.5, 675.5, 459.5),
  ...slatX.slice(1, 4).map(x => R(x, 311.5, x + 3, 478.5)),
  ...[458.5, 630.5].flatMap(x => [`M${x} 331.5V311.5h3V331.5`, `M${x} 459.5V478.5h3V459.5`]),
  ...[454.5, 625.5].flatMap(x => [
    R(x, 337.5, x + 11.5, 346.5), R(x, 443.5, x + 11.5, 453.5),
    `M${x} 341.5h11.5M${x} 448.5h11.5`,
  ]),
  ...[455.5, 627.5].flatMap(x => [R(x, 346.5, x + 8.5, 351.5), R(x, 438.5, x + 8.5, 443.5)]),
  R(458.5, 348.5, 461.5, 441.5),
  R(630.5, 348.5, 633.5, 441.5),
  ...[370.5, 392.5, 414.5].flatMap(y => [R(456, y, 458.5, y + 5), R(633.5, y, 636, y + 5)]),
  "M466 342.5H625M466 447.5H625",
  R(465.5, 337.5, 468.5, 342.5), R(623, 337.5, 625.5, 342.5),
  R(465.5, 447.5, 468.5, 453.5), R(623, 447.5, 625.5, 453.5),
].join("");

const beam = "M416.5 672.5H675.5V679L655 690.5H436L416.5 679Z" + slatX.map(x => R(x - 0.5, 665.5, x + 2.5, 677.5)).join("");
const gateBeam = "M1038.5 192.5H1296.5V199.5L1277.5 210.5H1057.5L1038.5 199.5Z"
  + [1080, 1123, 1166, 1209, 1252].map(x => R(x, 185.5, x + 3, 197.5)).join("");

const front = [
  R(454.5, 690.5, 466, 997.5),
  R(625.5, 690.5, 636.5, 997.5),
  "M466 776.5A79.700 79.700 0 0 1 625.5 776.5",
  "M466 731.5A91.600 91.600 0 0 1 625.5 731.5",
  "M545.700 685.5V697M481.700 712.300L489.300 720.300M610 712.300L602.300 720.300",
].join("");

const side = [
  "M1081.5 665.5H1248.5V672.5L1240.5 677.5H1089.5L1081.5 672.5Z",
  R(1101.5, 672.5, 1107.5, 690.5), R(1223.5, 672.5, 1229.5, 690.5),
  R(1106.5, 678.5, 1116.5, 997.5), R(1213.5, 678.5, 1223.5, 997.5),
  "M1111.5 678.5V997.5M1218.5 678.5V997.5",
  R(1116.5, 751.5, 1121.5, 910.5), R(1208.5, 751.5, 1213.5, 910.5),
  ...[751.5, 789.5, 828.5, 867, 905.5].map(y => `M1121.5 ${y}H1208.5M1121.5 ${y + 4.7}H1208.5`),
  "M1106.5 967.5h10M1213.5 967.5h10",
].join("");

const sideSlats = R(1139.5, 721.5, 1144.5, 940.5) + R(1162.5, 704.5, 1167.5, 957) + R(1185.5, 721.5, 1190.5, 940.5);

type Picket = [number, number];
const TOP = 348.5;
const leftSolid: Picket[] = [827.5, 852.5, 877.5, 902.5, 927.5, 952.5].map(x => [x, TOP]);
const leftFaded: Picket[] = [[977.5, TOP], [1002.5, 342.5], [1026.5, 328.5], [1051.5, 312.5]];
const rightFaded: Picket[] = [[1271.5, 312.5], [1296.5, 328.5], [1321.5, 342.5], [1346.5, TOP], [1371.5, TOP], [1396.5, TOP]];
const rightSolid: Picket[] = [1421.5, 1446.5, 1470.5, 1495.5].map(x => [x, TOP]);

const pickets = (list: Picket[]) => list.map(([x, y]) => R(x, y, x + 12, 478.5)).join("");
const rails = (from: number, to: number) => [368.5, 373.5, 453.5, 458.5].map(y => `M${from} ${y}H${to}`).join("");
const feet = (x: number) => `M${x} 478.5V488M${x + 5.5} 478.5V488`;

const DARK = "#8c8c8c";
const FADED = "#d6d6d6";

const Drawing = () => (
  <Model aria-label="Arbor drawing">
    <g transform="translate(0 -182)" fill="none" stroke={DARK} strokeWidth="1.200">
      <path d={plan} />
      <path d={beam + front} />
      <path d={side} />
      <path d={sideSlats} fill="#fff" />
      <path d="M432 967.5H661M1118 967.5H1212" stroke="#955a5e" />

      <path d="M813 488H1543" stroke="#dadada" strokeWidth="1.600" />
      <g stroke={FADED}>
        <path d={rails(964.5, 1076) + rails(1258.5, 1396.5)} />
        <path d={pickets(leftFaded) + pickets(rightFaded)} fill="#fff" />
        <path d={feet(1005.5) + feet(1324.5)} />
        <path d="M1076.5 210.5V488H1087.5V210.5M1247.5 210.5V488H1258.5V210.5" />
        <path d="M1087.5 297A79.700 79.700 0 0 1 1247.5 297" />
        <path d="M1087.5 251.5A91.600 91.600 0 0 1 1138 210.5M1197 210.5A91.600 91.600 0 0 1 1247.5 251.5" />
        <circle cx="1148" cy="294" r="18.400" />
        <circle cx="1183" cy="272.500" r="18.400" />
        <path d="M1148 312.5V488M1122.5 393.5V362.5L1137 320.5H1160L1174.5 362.5V393.5" />
        <path d="M1183 291V488M1171 300.5H1195L1208.5 343.5V373.5" />
      </g>
      <path d={`${rails(839.5, 952.5)}${rails(1408.5, 1495.5)}M1408.5 348.5V478.5`} />
      <path d={pickets(leftSolid) + pickets(rightSolid)} fill="#fff" />
      <path d={feet(830.5) + feet(1499.5)} />
      <path d={gateBeam} />

      <rect x="973.5" y="236.5" width="427" height="274" fill="#c1ffcf" stroke="none" style={{ mixBlendMode: "multiply" }} />
      <rect x="973.5" y="236.5" width="427" height="274" stroke="#111" strokeDasharray="4 2" />
      <path d="M925 510.5H1022M973.5 458V559" stroke="#000" />
      <path d="m977.500 498 7.500 7.500m0-7.500-7.500 7.500" stroke="#2f5a2c" strokeWidth="4.500" />
      <path d="m978 498.500 6.500 6.500m0-6.500-6.500 6.500" stroke="#c77a3c" strokeWidth="2" />
    </g>
  </Model>
);

const tabs = ["Insert", "Annotate", "View", "Manage", "Output", "Add-ins", "Collaborate", "Express Tools", "Featured Apps"];

export default function App() {
  return (
    <Shell>
      <Global />
      <TitleBar>
        <Quick>
          <AppMenu $gap={1} aria-label="Application menu"><Icon name="logo" /><Caret /></AppMenu>
          {["new", "open", "save", "saveas", "mobileOpen", "mobileSave", "print"].map(n => (
            <ToolButton key={n} aria-label={n}><Icon name={n} /></ToolButton>
          ))}
          <ToolButton $gap={6} aria-label="Undo"><Icon name="undo" /><Caret /></ToolButton>
          <ToolButton $gap={6} aria-label="Redo"><Icon name="redo" /><Caret $c="#8a8f96" /></ToolButton>
          <ToolButton aria-label="Customize"><Icon name="custom" /></ToolButton>
          <Share><Icon name="share" />Share</Share>
        </Quick>
        <Title><span>Autodesk AutoCAD 2025</span><span>Arbor.dwg</span></Title>
        <Account>
          <Reveal aria-label="Collapse search" />
          <Search aria-label="Search" placeholder="Type a keyword or phrase" />
          <AccountTools>
            <ToolButton aria-label="Search"><Icon name="search" /></ToolButton>
            <User><Icon name="user" /><span>ambrosl</span><Caret /></User>
            <ToolButton aria-label="Store"><Icon name="cart" /></ToolButton>
            <ToolButton aria-label="Autodesk apps"><Icon name="hub" /><Caret /></ToolButton>
            <Rule />
            <ToolButton $gap={6} aria-label="Help"><Icon name="help" /><Caret /></ToolButton>
            <ToolButton aria-label="Assistant"><Icon name="assist" /></ToolButton>
          </AccountTools>
          <WindowButton aria-label="Minimize"><Icon name="min" /></WindowButton>
          <WindowButton aria-label="Restore"><Icon name="restore" /></WindowButton>
          <WindowButton aria-label="Close"><Icon name="close" /></WindowButton>
        </Account>
      </TitleBar>

      <RibbonTabs>
        <RibbonTab $on>Home</RibbonTab>
        {tabs.map(t => <RibbonTab key={t}>{t}</RibbonTab>)}
        <Minimise aria-label="Minimize ribbon"><MinimiseBox /><Caret /></Minimise>
      </RibbonTabs>

      <Ribbon>
        <Panel title="Draw" w={225}>
          <Big icon="line" label="Line" w={44} />
          <Big icon="polyline" label="Polyline" w={42} />
          <Big icon="circle" label="Circle" w={58} menu />
          <Big icon="arc" label="Arc" w={34} menu />
          <Column $pad={8}>
            <Small icon="rect" menu />
            <Small icon="ellipse" menu />
            <Small icon="hatch" menu />
          </Column>
        </Panel>
        <Panel title="Modify" w={250} pad={6}>
          <Column $w={72}>
            <Small icon="move" label="Move" />
            <Small icon="copy" label="Copy" />
            <Small icon="stretch" label="Stretch" />
          </Column>
          <Column $w={69}>
            <Small icon="rotate" label="Rotate" />
            <Small icon="mirror" label="Mirror" />
            <Small icon="scale" label="Scale" />
          </Column>
          <Column $w={61}>
            <Small icon="trim" label="Trim" menu fill />
            <Small icon="fillet" label="Fillet" menu fill />
            <Small icon="array" label="Array" menu fill />
          </Column>
          <Column $pad={14}>
            <Small icon="erase" />
            <Small icon="explode" />
            <Small icon="offset" />
          </Column>
        </Panel>
        <Panel title="Annotation" w={189} pad={1}>
          <Big icon="text" label="Text" w={46} menu />
          <Big icon="dimension" label="Dimension" w={60} />
          <Column $pad={6}>
            <Small icon="linear" label="Linear" menu />
            <Small icon="leader" label="Leader" menu />
            <Small icon="table" label="Table" />
          </Column>
        </Panel>
        <Panel title="Layers" w={273} pad={1}>
          <Big icon="layerProps" label={"Layer\nProperties"} w={60} />
          <Column $pad={1}>
            <Combo $w={208} $pad={3}>
              <Icon name="bulb" /><Icon name="sun" /><Icon name="unlock" /><Swatch />
              <ComboSelect aria-label="Layer"><option>Grade</option></ComboSelect>
              <Caret $s={4} />
            </Combo>
            <LayerRow>
              <Small icon="layOff" />
              <Small icon="layIso" />
              <Small icon="layFreeze" />
              <Small icon="layLock" />
              <Small icon="layCurrent" label="Make Current" />
            </LayerRow>
            <LayerRow>
              <Small icon="layOn" />
              <Small icon="layUniso" />
              <Small icon="layThaw" />
              <Small icon="layUnlock" />
              <Small icon="layMatch" label="Match Layer" />
            </LayerRow>
          </Column>
        </Panel>
        <Panel title="Block" w={201}>
          <Big icon="insert" label="Insert" w={42} menu />
          <Big icon="detect" label="Detect" w={36} />
          <Column $pad={7}>
            <Small icon="create" label="Create" />
            <Small icon="edit" label="Edit" />
            <Small icon="editAttr" label="Edit Attributes" menu />
          </Column>
        </Panel>
        <Panel title="Properties" w={265} pad={1} launch>
          <Big icon="matchProps" label={"Match\nProperties"} w={60} />
          <Column $w={21} $pad={2}>
            <Small icon="wheel" />
            <Small icon="weight" />
            <Small icon="ltype" />
          </Column>
          <Column>
            <Combo $w={180}>
              <Swatch />
              <ComboSelect aria-label="Object color"><option>ByLayer</option></ComboSelect>
              <Caret $s={4} />
            </Combo>
            <Combo $w={180}>
              <LineSample />
              <ComboSelect aria-label="Lineweight"><option>ByLayer</option></ComboSelect>
              <Caret $s={4} />
            </Combo>
            <Combo $w={180}>
              <LineSample />
              <ComboSelect aria-label="Linetype"><option>ByLayer</option></ComboSelect>
              <Caret $s={4} />
            </Combo>
          </Column>
        </Panel>
        <Panel title="Groups" w={69}>
          <Big icon="group" label="Group" w={42} />
          <Column>
            <GroupToggle aria-label="Ungroup"><Icon name="ungroup" /></GroupToggle>
            <GroupToggle aria-label="Group edit"><Icon name="groupEdit" /></GroupToggle>
            <GroupToggle $on aria-label="Group selection"><Icon name="groupSel" /></GroupToggle>
          </Column>
        </Panel>
        <Panel title="Utilities" w={97}>
          <Big icon="measure" label="Measure" w={70} menu />
          <Column $pad={3}>
            <Small icon="quick" />
            <Small icon="selectAll" />
            <Small icon="calc" />
          </Column>
        </Panel>
        <Panel title="Clipboard" w={91} caret={false}>
          <Big icon="paste" label="Paste" w={53} menu />
          <Column $pad={3}>
            <Small icon="cut" menu />
            <Small icon="copyClip" menu />
          </Column>
        </Panel>
        <Panel title="View" launch>
          <Big icon="base" label="Base" w={61} menu />
        </Panel>
      </Ribbon>

      <FileTabs>
        <TabMenu $gap={6} aria-label="File menu"><Icon name="menu" /></TabMenu>
        <Icon name="slash" />
        <PlainTab>Start</PlainTab>
        <Slanted>Arbor*<Icon name="tabClose" /></Slanted>
        <PlusTab aria-label="New drawing"><Icon name="plus" /></PlusTab>
        <Icon name="slash" />
      </FileTabs>

      <Viewport>
        <Drawing />
        <ViewLabel>[−][Top][2D Wireframe]</ViewLabel>
        <Marker $x={1409} $y={32}>P1</Marker>
        <Marker $x={918} $y={342}>P2</Marker>
        <Prompt>Specify opposite corner:</Prompt>
        <DocButtons>
          <button aria-label="Minimize view"><Icon name="docMin" /></button>
          <button aria-label="Restore view"><Icon name="docRestore" /></button>
          <button aria-label="Close view"><Icon name="docClose" /></button>
        </DocButtons>
        <Compass>
          <Cube><span>TOP</span></Cube>
          <Dir $x={35} $y={-20}>N</Dir>
          <Dir $x={35} $y={93}>S</Dir>
          <Dir $x={-21} $y={36}>W</Dir>
          <Dir $x={91} $y={36}>E</Dir>
        </Compass>
        <Wcs>WCS<Icon name="wcs" /></Wcs>
        <NavBar>
          <NavEnd aria-label="Close bar"><Icon name="navClose" size={8} /></NavEnd>
          <button aria-label="Wheel"><Icon name="navWheel" size={22} /></button>
          <Caret $c="#cfd2d2" />
          <hr />
          <button aria-label="Pan"><Icon name="navPan" size={23} /></button>
          <button aria-label="Zoom"><Icon name="navZoom" size={23} /></button>
          <Caret $c="#cfd2d2" />
          <button aria-label="Orbit"><Icon name="navOrbit" size={23} /></button>
          <Caret $c="#cfd2d2" />
          <hr />
          <button aria-label="Show motion"><Icon name="navShow" size={23} /></button>
          <NavEnd $last aria-label="Bar options"><Icon name="navMore" size={8} /></NavEnd>
        </NavBar>
        <Command>
          <CommandTools>
            <Icon name="grip" />
            <button aria-label="Close command line"><Icon name="cmdClose" /></button>
            <button aria-label="Customize command line"><Icon name="wrench" /></button>
          </CommandTools>
          <CommandText>
            <Icon name="erase" />
            <Caret $s={4} $c="#555" />
            <b>ERASE</b>
            <span>Select objects: Specify opposite corner:</span>
            <CommandInput aria-label="Command" />
            <UpCaret aria-label="Command history" />
          </CommandText>
        </Command>
      </Viewport>

      <Status>
        <Layouts>
          <TabMenu $gap={9} aria-label="Layout menu"><Icon name="menu" /></TabMenu>
          <Slanted>Model</Slanted>
          <PlainTab $late>ANSI C Layout</PlainTab>
          <Icon name="slash" />
          <PlusTab aria-label="New layout"><Icon name="plus" /></PlusTab>
          <Icon name="slash" />
        </Layouts>
        <StatusTools>
          <StatusGroup><Cell $w={47}>MODEL</Cell></StatusGroup>
          <StatusGroup>
            <Cell aria-label="Grid"><Icon name="grid" /></Cell>
            <Cell aria-label="Snap"><Icon name="dots" /></Cell>
            <Cell $w={16} aria-label="Snap settings"><Caret $s={4} /></Cell>
          </StatusGroup>
          <StatusGroup>
            <Cell aria-label="Ortho"><Icon name="ortho" /></Cell>
            <Cell $w={22} $on aria-label="Polar tracking"><Icon name="polar" /></Cell>
            <Cell $w={18} aria-label="Polar settings"><Caret $s={4} /></Cell>
            <Cell $w={22} aria-label="Isometric drafting"><Icon name="iso" /></Cell>
            <Cell $w={18} aria-label="Isometric settings"><Caret $s={4} /></Cell>
          </StatusGroup>
          <StatusGroup>
            <Cell aria-label="Snap tracking"><Icon name="track" /></Cell>
            <Cell $w={22} $on aria-label="Object snap"><Icon name="osnap" /></Cell>
            <Cell $w={18} aria-label="Object snap settings"><Caret $s={4} /></Cell>
          </StatusGroup>
          <StatusGroup>
            <Cell $w={22} $on aria-label="Annotation visibility"><Icon name="annoVis" /></Cell>
            <Cell aria-label="Auto scale"><Icon name="annoAuto" /></Cell>
            <Cell aria-label="Annotation scale"><Icon name="anno" /></Cell>
            <Cell $w={33}>1:1<Caret $s={4} /></Cell>
          </StatusGroup>
          <StatusGroup>
            <Cell aria-label="Workspace"><Icon name="gear" /></Cell>
            <Cell $w={16} aria-label="Workspace settings"><Caret $s={4} /></Cell>
          </StatusGroup>
          <StatusGroup><Cell aria-label="Annotation monitor"><Icon name="thinPlus" /></Cell></StatusGroup>
          <StatusGroup><Cell aria-label="Isolate objects"><Icon name="shapes" /></Cell></StatusGroup>
          <StatusGroup>
            <Cell $w={28} aria-label="Hardware"><Icon name="hardware" /></Cell>
            <Cell $w={28} aria-label="Performance"><Icon name="monitor" /></Cell>
          </StatusGroup>
          <StatusGroup><Cell aria-label="Clean screen"><Icon name="clean" /></Cell></StatusGroup>
          <StatusGroup><Cell aria-label="Customization"><Icon name="menu" /></Cell></StatusGroup>
        </StatusTools>
      </Status>
    </Shell>
  );
}
